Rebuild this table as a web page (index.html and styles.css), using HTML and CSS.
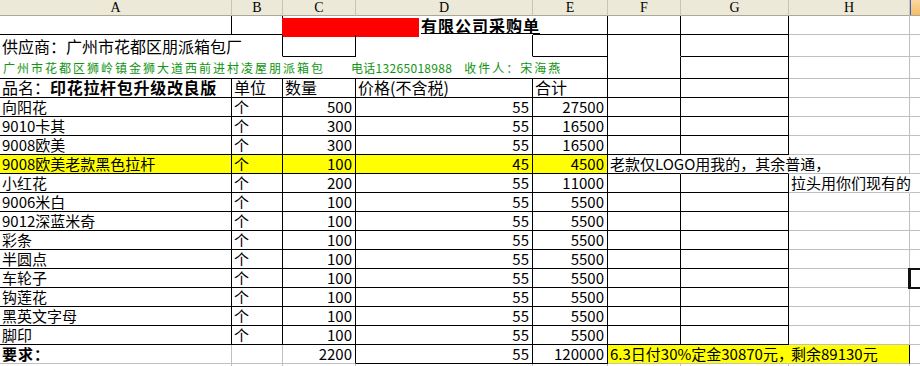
FILE: index.html
```html
<!DOCTYPE html>
<html lang="zh-CN">
<head>
<meta charset="utf-8">
<title>采购单</title>
<link rel="stylesheet" href="styles.css">
</head>
<body>
<div class="sheet">
  <!-- column headers -->
  <div class="hd">A</div><div class="hd">B</div><div class="hd">C</div><div class="hd">D</div>
  <div class="hd">E</div><div class="hd">F</div><div class="hd">G</div><div class="hd">H</div>
  <div class="hd hd-sel"></div>

  <!-- row 1 -->
  <div class="c k"></div>
  <div class="c k"></div>
  <div class="c span2 xr xb title-cell"><span class="redact"></span><span class="title">有限公司采购单</span></div>
  <div class="c k"></div>
  <div class="c k"></div>
  <div class="c k"></div>
  <div class="c"></div>
  <div class="c"></div>

  <!-- row 2 -->
  <div class="c span2 kr xb big">供应商：广州市花都区朋派箱包厂</div>
  <div class="c k"></div>
  <div class="c kr xb"></div>
  <div class="c k"></div>
  <div class="c kr xb"></div>
  <div class="c k"></div>
  <div class="c"></div>
  <div class="c"></div>

  <!-- row 3 -->
  <div class="c span5 k green"><span class="addr">广州市花都区狮岭镇金狮大道西前进村凌屋朋派箱包</span><span class="tel">电话13265018988</span><span class="rcv">收件人：宋海燕</span></div>
  <div class="c k"></div>
  <div class="c k"></div>
  <div class="c"></div>
  <div class="c"></div>

  <!-- row 4 -->
  <div class="c k big">品名：<b class="bold">印花拉杆包升级改良版</b></div>
  <div class="c k big">单位</div>
  <div class="c k big">数量</div>
  <div class="c k big">价格(不含税)</div>
  <div class="c k big">合计</div>
  <div class="c k"></div>
  <div class="c k"></div>
  <div class="c"></div>
  <div class="c"></div>

  <!-- data rows -->
  <div class="c k">向阳花</div><div class="c k">个</div><div class="c k n">500</div><div class="c k n">55</div><div class="c k n">27500</div><div class="c k"></div><div class="c k"></div><div class="c"></div><div class="c"></div>
  <div class="c k">9010卡其</div><div class="c k">个</div><div class="c k n">300</div><div class="c k n">55</div><div class="c k n">16500</div><div class="c k"></div><div class="c k"></div><div class="c"></div><div class="c"></div>
  <div class="c k">9008欧美</div><div class="c k">个</div><div class="c k n">300</div><div class="c k n">55</div><div class="c k n">16500</div><div class="c k"></div><div class="c k"></div><div class="c"></div><div class="c"></div>
  <div class="c k y">9008欧美老款黑色拉杆</div><div class="c k y">个</div><div class="c k y n">100</div><div class="c k y n">45</div><div class="c k y n">4500</div><div class="c kb xr">老款仅LOGO用我的，其余普通，</div><div class="c kb xr"></div><div class="c"></div><div class="c"></div>
  <div class="c k">小红花</div><div class="c k">个</div><div class="c k n">200</div><div class="c k n">55</div><div class="c k n">11000</div><div class="c k"></div><div class="c k"></div><div class="c xr">拉头用你们现有的</div><div class="c"></div>
  <div class="c k">9006米白</div><div class="c k">个</div><div class="c k n">100</div><div class="c k n">55</div><div class="c k n">5500</div><div class="c k"></div><div class="c k"></div><div class="c"></div><div class="c"></div>
  <div class="c k">9012深蓝米奇</div><div class="c k">个</div><div class="c k n">100</div><div class="c k n">55</div><div class="c k n">5500</div><div class="c k"></div><div class="c k"></div><div class="c"></div><div class="c"></div>
  <div class="c k">彩条</div><div class="c k">个</div><div class="c k n">100</div><div class="c k n">55</div><div class="c k n">5500</div><div class="c k"></div><div class="c k"></div><div class="c"></div><div class="c"></div>
  <div class="c k">半圆点</div><div class="c k">个</div><div class="c k n">100</div><div class="c k n">55</div><div class="c k n">5500</div><div class="c k"></div><div class="c k"></div><div class="c"></div><div class="c"></div>
  <div class="c k">车轮子</div><div class="c k">个</div><div class="c k n">100</div><div class="c k n">55</div><div class="c k n">5500</div><div class="c k"></div><div class="c k"></div><div class="c"></div><div class="c active"></div>
  <div class="c k">钩莲花</div><div class="c k">个</div><div class="c k n">100</div><div class="c k n">55</div><div class="c k n">5500</div><div class="c k"></div><div class="c k"></div><div class="c"></div><div class="c"></div>
  <div class="c k">黑英文字母</div><div class="c k">个</div><div class="c k n">100</div><div class="c k n">55</div><div class="c k n">5500</div><div class="c k"></div><div class="c k"></div><div class="c"></div><div class="c"></div>
  <div class="c k">脚印</div><div class="c k">个</div><div class="c k n">100</div><div class="c k n">55</div><div class="c k n">5500</div><div class="c k"></div><div class="c k"></div><div class="c"></div><div class="c"></div>

  <!-- summary row -->
  <div class="c"><b class="req">要求：</b></div>
  <div class="c"></div>
  <div class="c kr n">2200</div>
  <div class="c k n">55</div>
  <div class="c k n">120000</div>
  <div class="c span2 y xr">6.3日付30%定金30870元，</div>
  <div class="c y kr">剩余89130元</div>
  <div class="c"></div>

  <!-- partial row -->
  <div class="c"></div><div class="c"></div><div class="c"></div><div class="c"></div><div class="c"></div><div class="c"></div><div class="c"></div><div class="c"></div><div class="c"></div>
</div>
</body>
</html>
```

FILE: styles.css
```css
* {
  box-sizing: border-box;
  margin: 0;
  padding: 0;
}

body {
  margin: 0;
  width: 920px;
  height: 366px;
  overflow: hidden;
  background: #ffffff;
  font-family: "Noto Sans CJK SC", "Noto Sans", sans-serif;
  color: #000;
}

.sheet {
  display: grid;
  grid-template-columns: 232px 51px 73px 177px 75px 73px 108px 121px 40px;
  grid-template-rows: 16px 19px 22px 22px 19px repeat(14, 19px) 19px;
  width: 960px;
}

/* column headers */
.hd {
  background: #ece9d8;
  border-right: 1px solid #c9c5b3;
  border-bottom: 1px solid #aca899;
  font-family: "Liberation Serif", "DejaVu Serif", serif;
  font-size: 14px;
  line-height: 15px;
  display: flex;
  align-items: center;
  justify-content: center;
}

.hd-sel {
  background: linear-gradient(#fbd8a0, #f6bc66);
  box-shadow: inset 1px 0 0 #3b62c4;
}

/* cells */
.c {
  border-right: 1px solid #c0c0c0;
  border-bottom: 1px solid #c0c0c0;
  font-size: 15px;
  line-height: 18px;
  white-space: nowrap;
  padding: 0 2px;
  display: flex;
  align-items: flex-end;
  min-width: 0;
}

.n {
  justify-content: flex-end;
  padding-right: 3px;
}

.k {
  border-right-color: #000;
  border-bottom-color: #000;
}

.kr {
  border-right-color: #000;
}

.kb {
  border-bottom-color: #000;
}

.xr {
  border-right-color: transparent;
}

.xb {
  border-bottom-color: transparent;
}

.y {
  background: #ffff00;
}

.span2 {
  grid-column: span 2;
}

.span5 {
  grid-column: span 5;
}

.big {
  font-size: 16px;
  line-height: 19px;
  padding-left: 2px;
}

.bold {
  font-weight: 700;
  letter-spacing: 0.7px;
}

.req {
  font-weight: 700;
  letter-spacing: 1px;
}

/* title row */
.title-cell {
  padding: 0;
  align-items: flex-start;
}

.redact {
  display: inline-block;
  width: 137px;
  height: 19px;
  margin-left: -1px;
  margin-top: 2px;
  background: #ff0000;
  flex: none;
}

.title {
  font-size: 16px;
  font-weight: 700;
  letter-spacing: 1px;
  line-height: 17px;
  margin-left: 2px;
  margin-top: 1px;
  text-decoration: underline;
  text-underline-offset: 1px;
}

/* green address row */
.green {
  color: #0f950f;
  font-size: 12px;
  line-height: 14px;
  padding-bottom: 3px;
  padding-left: 3px;
}

.addr {
  letter-spacing: 2px;
}

.tel {
  margin-left: 26px;
  letter-spacing: 0.3px;
}

.rcv {
  margin-left: 12px;
  letter-spacing: 2px;
}

.active {
  position: relative;
  z-index: 1;
  border: 2px solid #111;
  border-left-width: 3px;
  margin: -1px 0 -1px -2px;
}
```
